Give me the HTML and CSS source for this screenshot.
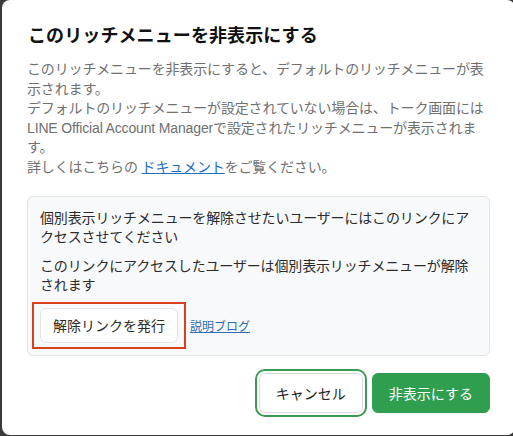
FILE: index.html
```html
<!DOCTYPE html>
<html lang="ja">
<head>
<meta charset="utf-8">
<title>リッチメニュー非表示</title>
<link rel="stylesheet" href="styles.css">
</head>
<body>
<div class="dialog">
  <h2 class="title">このリッチメニューを非表示にする</h2>
  <p class="desc">このリッチメニューを非表示にすると、デフォルトのリッチメニューが表示されます。<br>デフォルトのリッチメニューが設定されていない場合は、トーク画面にはLINE Official Account Managerで設定されたリッチメニューが表示されます。<br>詳しくはこちらの <a class="link" href="#">ドキュメント</a>をご覧ください。</p>
  <div class="box">
    <p class="box-text">個別表示リッチメニューを解除させたいユーザーにはこのリンクにアクセスさせてください</p>
    <p class="box-text second">このリンクにアクセスしたユーザーは個別表示リッチメニューが解除されます</p>
    <div class="box-actions">
      <span class="highlight"><button class="btn-secondary">解除リンクを発行</button></span>
      <a class="small-link" href="#">説明ブログ</a>
    </div>
  </div>
  <div class="footer">
    <button class="btn-cancel">キャンセル</button>
    <button class="btn-primary">非表示にする</button>
  </div>
</div>
</body>
</html>
```
FILE: styles.css
```css
* { box-sizing: border-box; }
html, body { margin: 0; padding: 0; }
body {
  background: #3b3b3b;
  font-family: "Liberation Sans", "Noto Sans CJK JP", sans-serif;
  width: 513px;
  height: 436px;
  overflow: hidden;
}
.dialog {
  margin-left: 2px;
  width: 513px;
  height: 435px;
  background: #fff;
  border-radius: 8px;
  padding: 22px 25px 22px 25px;
}
.title {
  margin: 0 0 0 1px;
  font-size: 18px;
  letter-spacing: 0.1px;
  line-height: 28px;
  font-weight: 700;
  color: #111;
}
.desc {
  margin: 10px 0 0 0;
  font-size: 14px;
  letter-spacing: -0.15px;
  line-height: 19.6px;
  color: #707070;
}
.link {
  color: #1d6fc4;
  text-decoration: underline;
}
.box {
  margin-top: 18px;
  border: 1px solid #e3e6ea;
  border-radius: 6px;
  background: #f7f9fb;
  padding: 12px 12px 12px 12px;
}
.box-text {
  margin: 0;
  font-size: 14px;
  letter-spacing: -0.15px;
  line-height: 19.6px;
  color: #2b2b2b;
}
.box-text.second { margin-top: 9px; }
.box-actions {
  margin-top: 12px;
  display: flex;
  align-items: center;
  gap: 12px;
}
.highlight {
  position: relative;
  display: inline-flex;
}
.highlight::after {
  content: "";
  position: absolute;
  left: -8px;
  right: -8px;
  top: -6px;
  bottom: -6px;
  border: 2px solid #d8401e;
  pointer-events: none;
}
.btn-secondary {
  font-family: inherit;
  height: 35px;
  padding: 0 12px;
  font-size: 14px;
  color: #2b2b2b;
  background: #fff;
  border: 1px solid #e2e4e8;
  border-radius: 6px;
}
.small-link {
  font-size: 12px;
  color: #2d6db5;
  text-decoration: underline;
}
.footer {
  margin-top: 17px;
  display: flex;
  justify-content: flex-end;
  gap: 9px;
}
.btn-cancel, .btn-primary {
  font-family: inherit;
  height: 40px;
  padding: 0 16px;
  font-size: 14px;
  border-radius: 6px;
}
.btn-cancel {
  background: #fff;
  color: #222;
  border: 1px solid #dcdcdc;
  box-shadow: 0 0 0 2px #fff, 0 0 0 4px #3a9a52;
}
.btn-primary {
  background: #2f9e4e;
  color: #fff;
  border: 1px solid #2f9e4e;
}
```
